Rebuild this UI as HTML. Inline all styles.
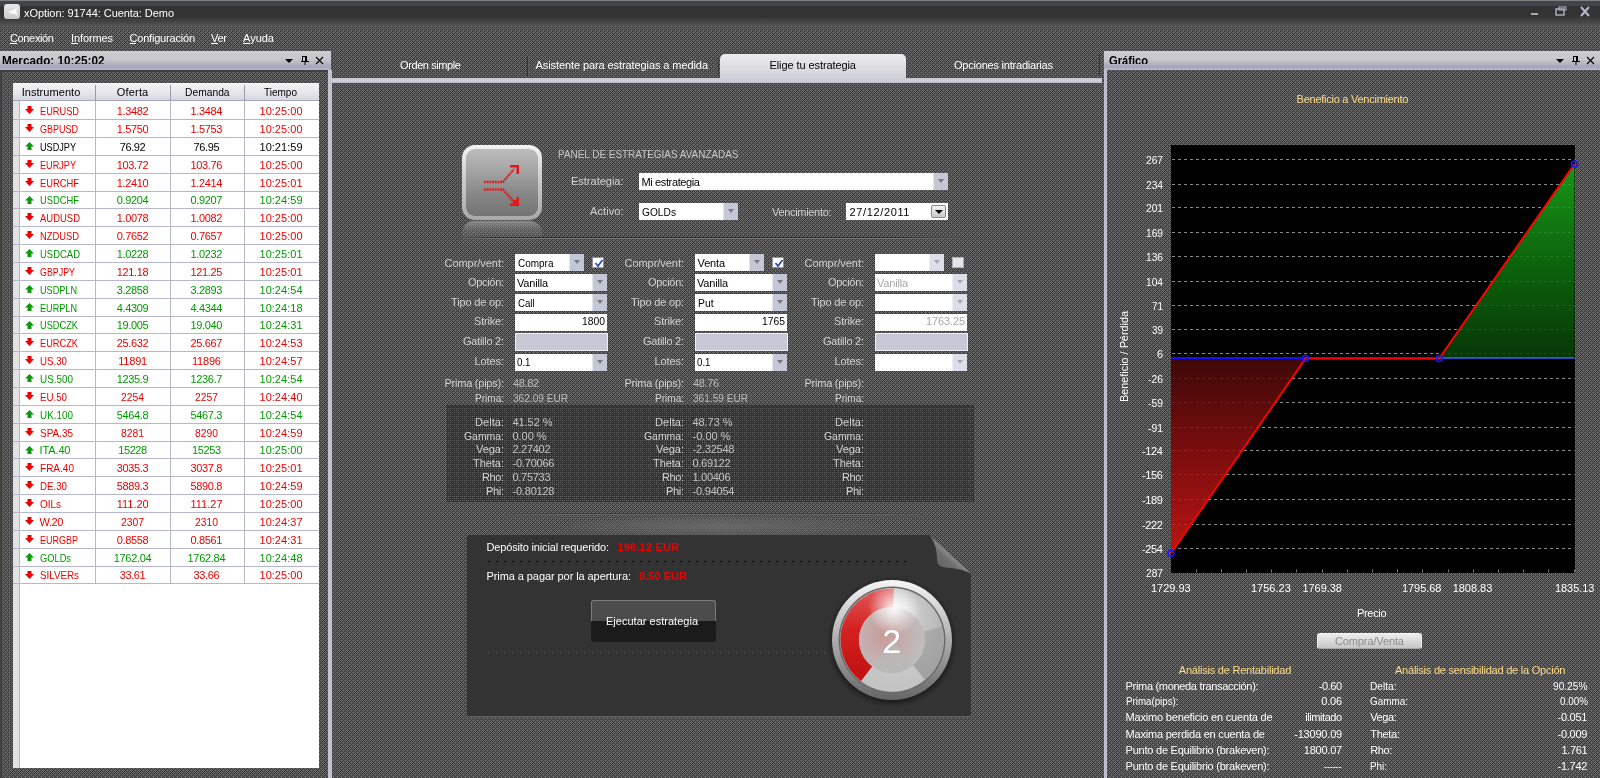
<!DOCTYPE html>
<html lang="es"><head><meta charset="utf-8"><title>xOption: 91744: Cuenta: Demo</title>
<style>
html,body{margin:0;padding:0;}
body{width:1600px;height:778px;overflow:hidden;background:#535353;font-family:"Liberation Sans",sans-serif;position:relative;}
.a{position:absolute;box-sizing:border-box;}
.t{position:absolute;white-space:nowrap;line-height:0;font-family:"Liberation Sans",sans-serif;}
svg{position:absolute;overflow:visible;}

.hdr{background:linear-gradient(#cfcfd2 0%,#c6c6cc 45%,#a9a9bd 80%,#b9b9cf 100%);}
.sel{background:#fff;}
.btn{position:absolute;right:0;top:0;bottom:0;width:14px;background:#c3c7d6;border-left:1px solid #e4e6ee;}
.btn:after{content:"";position:absolute;left:4px;top:6px;border:3px solid transparent;border-top:4px solid #7a7a7a;border-bottom:0;}
.dis .btn{background:#dcdfea;border-left-color:#eceef4;}
.dis .btn:after{border-top-color:#a8a8a8;}
</style></head>
<body>
<svg id="base" width="1600" height="778" viewBox="0 0 1600 778" shape-rendering="crispEdges" style="left:0;top:0"><defs><pattern id="dz" width="4" height="4" patternUnits="userSpaceOnUse"><rect width="4" height="4" fill="#666"/><rect x="3" y="0" width="1" height="1" fill="#333"/><rect x="0" y="1" width="1" height="1" fill="#333"/><rect x="2" y="1" width="1" height="1" fill="#333"/><rect x="1" y="2" width="1" height="1" fill="#333"/><rect x="0" y="3" width="1" height="1" fill="#333"/><rect x="2" y="3" width="1" height="1" fill="#333"/></pattern><pattern id="dk" width="8" height="8" patternUnits="userSpaceOnUse"><rect width="8" height="8" fill="#333"/><rect x="0" y="0" width="1" height="1" fill="#666"/><rect x="2" y="0" width="1" height="1" fill="#666"/><rect x="4" y="0" width="1" height="1" fill="#666"/><rect x="6" y="0" width="1" height="1" fill="#666"/><rect x="0" y="2" width="1" height="1" fill="#666"/><rect x="2" y="2" width="1" height="1" fill="#666"/><rect x="6" y="2" width="1" height="1" fill="#666"/><rect x="0" y="4" width="1" height="1" fill="#666"/><rect x="2" y="4" width="1" height="1" fill="#666"/><rect x="4" y="4" width="1" height="1" fill="#666"/><rect x="6" y="4" width="1" height="1" fill="#666"/><rect x="2" y="6" width="1" height="1" fill="#666"/><rect x="6" y="6" width="1" height="1" fill="#666"/></pattern></defs><rect width="1600" height="778" fill="url(#dz)"/><rect x="447" y="405" width="527" height="97" fill="url(#dk)"/></svg>
<div class="a " style="left:0px;top:0px;width:1600px;height:26px;background:linear-gradient(#808080 0px,#808080 1px,#42444c 1px,#42444c 5.5px,#333 6px,#333 17px,#3d3d3d 19px,#454545 22px,#4d4d4d 24px,#535353 26px);"></div>
<div class="a " style="left:4px;top:4.3px;width:16px;height:15px;background:linear-gradient(#e8e8e8,#c8c8c8);border-radius:3px;"><svg width="16" height="15" viewBox="0 0 16 15"><path d="M3 8 L9 6.5 L13 3.5 L12 7.5 L14 12 L10 9.5 L5 10 L8 8.2 Z" fill="#fff"/></svg></div>
<div class="a " style="left:10px;top:43px;width:6.5px;height:1px;background:#fff;"></div>
<div class="a " style="left:71px;top:43px;width:6.5px;height:1px;background:#fff;"></div>
<div class="a " style="left:129.5px;top:43px;width:6.5px;height:1px;background:#fff;"></div>
<div class="a " style="left:211px;top:43px;width:6.5px;height:1px;background:#fff;"></div>
<div class="a " style="left:243px;top:43px;width:6.5px;height:1px;background:#fff;"></div>
<div class="a hdr" style="left:0px;top:51px;width:331px;height:19px;"></div>
<div class="a " style="left:0px;top:70px;width:331px;height:2px;background:#404040;"></div>
<div class="a " style="left:0px;top:70px;width:1.5px;height:708px;background:#404040;"></div>
<div class="a " style="left:328px;top:70px;width:4px;height:708px;background:#c4c4d2;"></div>
<div class="a " style="left:13px;top:83px;width:306px;height:685px;background:#fff;"></div>
<div class="a " style="left:13px;top:83px;width:6.5px;height:685px;background:#e2e2e4;border-right:1px solid #b8b8c4;"></div>
<div class="a " style="left:13px;top:83px;width:306px;height:18px;background:linear-gradient(#f4f4f6,#e6e6ea 60%,#d6d6e2);border-bottom:1px solid #a8a8bc;"></div>
<div class="a " style="left:95px;top:85px;width:1px;height:15px;background:#9a9aa8;"></div>
<div class="a " style="left:95px;top:101px;width:1px;height:482px;background:#b6b6cc;"></div>
<div class="a " style="left:170px;top:85px;width:1px;height:15px;background:#9a9aa8;"></div>
<div class="a " style="left:170px;top:101px;width:1px;height:482px;background:#b6b6cc;"></div>
<div class="a " style="left:244px;top:85px;width:1px;height:15px;background:#9a9aa8;"></div>
<div class="a " style="left:244px;top:101px;width:1px;height:482px;background:#b6b6cc;"></div>
<div class="a " style="left:13px;top:119px;width:306px;height:1px;background:#b6b6cc;"></div>
<div class="a " style="left:25px;top:106px;width:9px;height:8px;"><svg width="9" height="8" viewBox="0 0 9 8"><path d="M2.5 0 H6.5 V3 H9 L4.5 8 L0 3 H2.5 Z" fill="#ee0000"/></svg></div>
<div class="a " style="left:13px;top:137px;width:306px;height:1px;background:#b6b6cc;"></div>
<div class="a " style="left:25px;top:124px;width:9px;height:8px;"><svg width="9" height="8" viewBox="0 0 9 8"><path d="M2.5 0 H6.5 V3 H9 L4.5 8 L0 3 H2.5 Z" fill="#ee0000"/></svg></div>
<div class="a " style="left:13px;top:155px;width:306px;height:1px;background:#b6b6cc;"></div>
<div class="a " style="left:25px;top:142px;width:9px;height:8px;"><svg width="9" height="8" viewBox="0 0 9 8"><path d="M4.5 0 L9 4.5 H6.5 V8 H2.5 V4.5 H0 Z" fill="#0a9a0a"/></svg></div>
<div class="a " style="left:13px;top:173px;width:306px;height:1px;background:#b6b6cc;"></div>
<div class="a " style="left:25px;top:160px;width:9px;height:8px;"><svg width="9" height="8" viewBox="0 0 9 8"><path d="M2.5 0 H6.5 V3 H9 L4.5 8 L0 3 H2.5 Z" fill="#ee0000"/></svg></div>
<div class="a " style="left:13px;top:191px;width:306px;height:1px;background:#b6b6cc;"></div>
<div class="a " style="left:25px;top:178px;width:9px;height:8px;"><svg width="9" height="8" viewBox="0 0 9 8"><path d="M2.5 0 H6.5 V3 H9 L4.5 8 L0 3 H2.5 Z" fill="#ee0000"/></svg></div>
<div class="a " style="left:13px;top:208px;width:306px;height:1px;background:#b6b6cc;"></div>
<div class="a " style="left:25px;top:196px;width:9px;height:8px;"><svg width="9" height="8" viewBox="0 0 9 8"><path d="M4.5 0 L9 4.5 H6.5 V8 H2.5 V4.5 H0 Z" fill="#0a9a0a"/></svg></div>
<div class="a " style="left:13px;top:226px;width:306px;height:1px;background:#b6b6cc;"></div>
<div class="a " style="left:25px;top:213px;width:9px;height:8px;"><svg width="9" height="8" viewBox="0 0 9 8"><path d="M2.5 0 H6.5 V3 H9 L4.5 8 L0 3 H2.5 Z" fill="#ee0000"/></svg></div>
<div class="a " style="left:13px;top:244px;width:306px;height:1px;background:#b6b6cc;"></div>
<div class="a " style="left:25px;top:231px;width:9px;height:8px;"><svg width="9" height="8" viewBox="0 0 9 8"><path d="M2.5 0 H6.5 V3 H9 L4.5 8 L0 3 H2.5 Z" fill="#ee0000"/></svg></div>
<div class="a " style="left:13px;top:262px;width:306px;height:1px;background:#b6b6cc;"></div>
<div class="a " style="left:25px;top:249px;width:9px;height:8px;"><svg width="9" height="8" viewBox="0 0 9 8"><path d="M4.5 0 L9 4.5 H6.5 V8 H2.5 V4.5 H0 Z" fill="#0a9a0a"/></svg></div>
<div class="a " style="left:13px;top:280px;width:306px;height:1px;background:#b6b6cc;"></div>
<div class="a " style="left:25px;top:267px;width:9px;height:8px;"><svg width="9" height="8" viewBox="0 0 9 8"><path d="M2.5 0 H6.5 V3 H9 L4.5 8 L0 3 H2.5 Z" fill="#ee0000"/></svg></div>
<div class="a " style="left:13px;top:298px;width:306px;height:1px;background:#b6b6cc;"></div>
<div class="a " style="left:25px;top:285px;width:9px;height:8px;"><svg width="9" height="8" viewBox="0 0 9 8"><path d="M4.5 0 L9 4.5 H6.5 V8 H2.5 V4.5 H0 Z" fill="#0a9a0a"/></svg></div>
<div class="a " style="left:13px;top:316px;width:306px;height:1px;background:#b6b6cc;"></div>
<div class="a " style="left:25px;top:303px;width:9px;height:8px;"><svg width="9" height="8" viewBox="0 0 9 8"><path d="M4.5 0 L9 4.5 H6.5 V8 H2.5 V4.5 H0 Z" fill="#0a9a0a"/></svg></div>
<div class="a " style="left:13px;top:333px;width:306px;height:1px;background:#b6b6cc;"></div>
<div class="a " style="left:25px;top:321px;width:9px;height:8px;"><svg width="9" height="8" viewBox="0 0 9 8"><path d="M4.5 0 L9 4.5 H6.5 V8 H2.5 V4.5 H0 Z" fill="#0a9a0a"/></svg></div>
<div class="a " style="left:13px;top:351px;width:306px;height:1px;background:#b6b6cc;"></div>
<div class="a " style="left:25px;top:338px;width:9px;height:8px;"><svg width="9" height="8" viewBox="0 0 9 8"><path d="M2.5 0 H6.5 V3 H9 L4.5 8 L0 3 H2.5 Z" fill="#ee0000"/></svg></div>
<div class="a " style="left:13px;top:369px;width:306px;height:1px;background:#b6b6cc;"></div>
<div class="a " style="left:25px;top:356px;width:9px;height:8px;"><svg width="9" height="8" viewBox="0 0 9 8"><path d="M2.5 0 H6.5 V3 H9 L4.5 8 L0 3 H2.5 Z" fill="#ee0000"/></svg></div>
<div class="a " style="left:13px;top:387px;width:306px;height:1px;background:#b6b6cc;"></div>
<div class="a " style="left:25px;top:374px;width:9px;height:8px;"><svg width="9" height="8" viewBox="0 0 9 8"><path d="M4.5 0 L9 4.5 H6.5 V8 H2.5 V4.5 H0 Z" fill="#0a9a0a"/></svg></div>
<div class="a " style="left:13px;top:405px;width:306px;height:1px;background:#b6b6cc;"></div>
<div class="a " style="left:25px;top:392px;width:9px;height:8px;"><svg width="9" height="8" viewBox="0 0 9 8"><path d="M2.5 0 H6.5 V3 H9 L4.5 8 L0 3 H2.5 Z" fill="#ee0000"/></svg></div>
<div class="a " style="left:13px;top:423px;width:306px;height:1px;background:#b6b6cc;"></div>
<div class="a " style="left:25px;top:410px;width:9px;height:8px;"><svg width="9" height="8" viewBox="0 0 9 8"><path d="M4.5 0 L9 4.5 H6.5 V8 H2.5 V4.5 H0 Z" fill="#0a9a0a"/></svg></div>
<div class="a " style="left:13px;top:441px;width:306px;height:1px;background:#b6b6cc;"></div>
<div class="a " style="left:25px;top:428px;width:9px;height:8px;"><svg width="9" height="8" viewBox="0 0 9 8"><path d="M2.5 0 H6.5 V3 H9 L4.5 8 L0 3 H2.5 Z" fill="#ee0000"/></svg></div>
<div class="a " style="left:13px;top:458px;width:306px;height:1px;background:#b6b6cc;"></div>
<div class="a " style="left:25px;top:446px;width:9px;height:8px;"><svg width="9" height="8" viewBox="0 0 9 8"><path d="M4.5 0 L9 4.5 H6.5 V8 H2.5 V4.5 H0 Z" fill="#0a9a0a"/></svg></div>
<div class="a " style="left:13px;top:476px;width:306px;height:1px;background:#b6b6cc;"></div>
<div class="a " style="left:25px;top:463px;width:9px;height:8px;"><svg width="9" height="8" viewBox="0 0 9 8"><path d="M2.5 0 H6.5 V3 H9 L4.5 8 L0 3 H2.5 Z" fill="#ee0000"/></svg></div>
<div class="a " style="left:13px;top:494px;width:306px;height:1px;background:#b6b6cc;"></div>
<div class="a " style="left:25px;top:481px;width:9px;height:8px;"><svg width="9" height="8" viewBox="0 0 9 8"><path d="M2.5 0 H6.5 V3 H9 L4.5 8 L0 3 H2.5 Z" fill="#ee0000"/></svg></div>
<div class="a " style="left:13px;top:512px;width:306px;height:1px;background:#b6b6cc;"></div>
<div class="a " style="left:25px;top:499px;width:9px;height:8px;"><svg width="9" height="8" viewBox="0 0 9 8"><path d="M2.5 0 H6.5 V3 H9 L4.5 8 L0 3 H2.5 Z" fill="#ee0000"/></svg></div>
<div class="a " style="left:13px;top:530px;width:306px;height:1px;background:#b6b6cc;"></div>
<div class="a " style="left:25px;top:517px;width:9px;height:8px;"><svg width="9" height="8" viewBox="0 0 9 8"><path d="M2.5 0 H6.5 V3 H9 L4.5 8 L0 3 H2.5 Z" fill="#ee0000"/></svg></div>
<div class="a " style="left:13px;top:548px;width:306px;height:1px;background:#b6b6cc;"></div>
<div class="a " style="left:25px;top:535px;width:9px;height:8px;"><svg width="9" height="8" viewBox="0 0 9 8"><path d="M2.5 0 H6.5 V3 H9 L4.5 8 L0 3 H2.5 Z" fill="#ee0000"/></svg></div>
<div class="a " style="left:13px;top:566px;width:306px;height:1px;background:#b6b6cc;"></div>
<div class="a " style="left:25px;top:553px;width:9px;height:8px;"><svg width="9" height="8" viewBox="0 0 9 8"><path d="M4.5 0 L9 4.5 H6.5 V8 H2.5 V4.5 H0 Z" fill="#0a9a0a"/></svg></div>
<div class="a " style="left:13px;top:583px;width:306px;height:1px;background:#b6b6cc;"></div>
<div class="a " style="left:25px;top:571px;width:9px;height:8px;"><svg width="9" height="8" viewBox="0 0 9 8"><path d="M2.5 0 H6.5 V3 H9 L4.5 8 L0 3 H2.5 Z" fill="#ee0000"/></svg></div>
<div class="a " style="left:332px;top:77.5px;width:770px;height:5px;background:linear-gradient(#c4c4d0,#d2d2de 50%,#bcbccc);"></div>
<div class="a " style="left:720px;top:54px;width:186px;height:27px;background:linear-gradient(#ececee,#dedee2 50%,#cacad6);border-radius:5px 5px 0 0;"></div>
<div class="a " style="left:526.5px;top:57px;width:1px;height:19px;background:#333;"></div>
<div class="a " style="left:527.5px;top:57px;width:1px;height:19px;background:#5e5e5e;"></div>
<div class="a " style="left:717.5px;top:57px;width:1px;height:19px;background:#333;"></div>
<div class="a " style="left:1098.5px;top:54px;width:1.5px;height:21px;background:#3a3a3a;"></div>
<div class="a " style="left:462px;top:145px;width:80px;height:75px;border-radius:13px;background:linear-gradient(#f4f4f4,#d0d0d0 40%,#a8a8a8);"></div>
<div class="a " style="left:466px;top:149px;width:72px;height:67px;border-radius:9px;background:linear-gradient(#bcbcbc,#a2a2a2 35%,#858585 70%,#747474);"></div>
<div class="a " style="left:462px;top:221px;width:80px;height:26px;border-radius:12px 12px 0 0;background:linear-gradient(rgba(185,185,185,.55),rgba(150,150,150,.28) 35%,rgba(120,120,120,.08) 75%,rgba(90,90,90,0));"></div>
<div class="a " style="left:455px;top:237px;width:520px;height:1px;background:linear-gradient(90deg,rgba(40,40,40,0),#2e2e2e 8%,#2e2e2e 85%,rgba(40,40,40,0));"></div>
<div class="a " style="left:455px;top:238px;width:520px;height:1px;background:linear-gradient(90deg,rgba(120,120,120,0),#777 8%,#777 85%,rgba(120,120,120,0));"></div>
<div class="a sel" style="left:639px;top:173px;width:309px;height:17px;"><div class="btn"></div></div>
<div class="a sel" style="left:639px;top:203px;width:98.5px;height:17px;"><div class="btn"></div></div>
<div class="a sel" style="left:845.5px;top:203px;width:102.5px;height:17px;"><div class="a" style="right:2px;top:2px;width:15px;height:13px;background:linear-gradient(#f4f4f4,#c8c8c8);border:1px solid #8a8a8a;border-radius:2px"></div><div class="a" style="right:5px;top:7px;border:4px solid transparent;border-top:4px solid #000;border-bottom:0"></div></div>
<div class="a sel " style="left:515px;top:254px;width:69px;height:17px;"><div class="btn"></div></div>
<div class="a " style="left:592px;top:257px;width:12px;height:11px;background:#fff;border:1px solid #8890a8;"><svg width="12" height="11" viewBox="0 0 12 11"><path d="M2.5 5 L5 8 L9.5 2" stroke="#2a4fb0" stroke-width="1.8" fill="none"/></svg></div>
<div class="a sel " style="left:515px;top:273.5px;width:92px;height:17.5px;"><div class="btn"></div></div>
<div class="a sel " style="left:515px;top:294px;width:92px;height:17px;"><div class="btn"></div></div>
<div class="a sel" style="left:515px;top:314px;width:92px;height:16.5px;"></div>
<div class="a " style="left:514.5px;top:332.5px;width:93px;height:18.5px;background:#c6c8d6;border:1px solid #f0f0f4;"></div>
<div class="a sel " style="left:515px;top:353.5px;width:92px;height:17px;"><div class="btn"></div></div>
<div class="a sel " style="left:695px;top:254px;width:69px;height:17px;"><div class="btn"></div></div>
<div class="a " style="left:772px;top:257px;width:12px;height:11px;background:#fff;border:1px solid #8890a8;"><svg width="12" height="11" viewBox="0 0 12 11"><path d="M2.5 5 L5 8 L9.5 2" stroke="#2a4fb0" stroke-width="1.8" fill="none"/></svg></div>
<div class="a sel " style="left:695px;top:273.5px;width:92px;height:17.5px;"><div class="btn"></div></div>
<div class="a sel " style="left:695px;top:294px;width:92px;height:17px;"><div class="btn"></div></div>
<div class="a sel" style="left:695px;top:314px;width:92px;height:16.5px;"></div>
<div class="a " style="left:694.5px;top:332.5px;width:93px;height:18.5px;background:#c6c8d6;border:1px solid #f0f0f4;"></div>
<div class="a sel " style="left:695px;top:353.5px;width:92px;height:17px;"><div class="btn"></div></div>
<div class="a sel dis" style="left:875px;top:254px;width:69px;height:17px;"><div class="btn"></div></div>
<div class="a " style="left:952px;top:257px;width:12px;height:11px;background:#fff;border:1px solid #b0b0b8;background:#e4e4ea;"></div>
<div class="a sel dis" style="left:875px;top:273.5px;width:92px;height:17.5px;"><div class="btn"></div></div>
<div class="a sel dis" style="left:875px;top:294px;width:92px;height:17px;"><div class="btn"></div></div>
<div class="a sel" style="left:875px;top:314px;width:92px;height:16.5px;"></div>
<div class="a " style="left:874.5px;top:332.5px;width:93px;height:18.5px;background:#c6c8d6;border:1px solid #f0f0f4;"></div>
<div class="a sel dis" style="left:875px;top:353.5px;width:92px;height:17px;"><div class="btn"></div></div>
<div class="a " style="left:490px;top:512.5px;width:450px;height:1px;background:linear-gradient(90deg,rgba(40,40,40,0),#383838 15%,#383838 85%,rgba(40,40,40,0));"></div>
<div class="a " style="left:490px;top:513.5px;width:450px;height:1px;background:linear-gradient(90deg,rgba(120,120,120,0),#6c6c6c 15%,#6c6c6c 85%,rgba(120,120,120,0));"></div>
<div class="a " style="left:560px;top:514.5px;width:320px;height:20px;background:radial-gradient(ellipse at 50% 55%,rgba(106,106,106,.95),rgba(100,100,100,.55) 45%,rgba(83,83,83,0) 72%);"></div>
<div class="a " style="left:467px;top:534.5px;width:504px;height:181.5px;background:#333;border-radius:2px;clip-path:polygon(0 0,461.8px 0,504px 39.2px,504px 100%,0 100%);"></div>
<div class="a " style="left:468px;top:716px;width:502px;height:1px;background:#666;"></div>
<div class="a " style="left:474px;top:719px;width:492px;height:1px;background:#474747;"></div>
<div class="a " style="left:488px;top:561px;width:420px;height:1px;background:repeating-linear-gradient(90deg,#000 0 2px,transparent 2px 8px);"></div>
<div class="a " style="left:488px;top:652px;width:345px;height:1px;background:repeating-linear-gradient(90deg,#6a6a6a 0 1px,transparent 1px 8px);"></div>
<div class="a " style="left:591px;top:600px;width:125px;height:42px;border-radius:3px;background:linear-gradient(#4d4d4d 0,#4b4b4b 49%,#1b1b1b 50%,#1c1c1c 100%);"></div>
<div class="a " style="left:591px;top:600px;width:125px;height:21px;border-radius:3px 3px 0 0;border:1px solid #7c7c7c;border-bottom:0;"></div>
<div class="a hdr" style="left:1104px;top:51px;width:496px;height:19px;"></div>
<div class="a " style="left:1103.5px;top:70px;width:3.5px;height:708px;background:#c0c0d0;"></div>
<div class="a " style="left:1171px;top:145px;width:403.5px;height:427.5px;background:#000;"></div>
<div class="a " style="left:1317px;top:633px;width:105px;height:15.5px;background:linear-gradient(#ececec,#dadada 50%,#c6c6c6);border-radius:3px;border:1px solid #f4f4f4;border-bottom-color:#a8a8a8;"></div>
<div id="txt" style="position:absolute;left:0;top:0;width:1600px;height:778px;will-change:transform">
<span class="t " style="left:24.00px;top:13.19px;font-size:11px;color:#fff;letter-spacing:-0.061px;">xOption: 91744: Cuenta: Demo</span>
<span class="t " style="left:10.00px;top:37.69px;font-size:11px;color:#fff;letter-spacing:-0.355px;">Conexión</span>
<span class="t " style="left:71.00px;top:37.69px;font-size:11px;color:#fff;letter-spacing:-0.114px;">Informes</span>
<span class="t " style="left:129.50px;top:37.69px;font-size:11px;color:#fff;letter-spacing:-0.198px;">Configuración</span>
<span class="t " style="left:211.00px;top:37.69px;font-size:11px;color:#fff;letter-spacing:-0.258px;">Ver</span>
<span class="t " style="left:243.00px;top:37.69px;font-size:11px;color:#fff;">Ayuda</span>
<span class="t " style="left:1.50px;top:61.30px;font-size:13px;color:#000;transform:scaleX(0.9035);transform-origin:0 0;font-weight:bold;">Mercado: 10:25:02</span>
<span class="t " style="left:21.70px;top:92.19px;font-size:11px;color:#000;letter-spacing:0.051px;">Instrumento</span>
<span class="t " style="left:116.75px;top:92.19px;font-size:11px;color:#000;letter-spacing:0.184px;">Oferta</span>
<span class="t " style="left:184.50px;top:92.19px;font-size:11px;color:#000;transform:scaleX(0.9349);transform-origin:0 0;">Demanda</span>
<span class="t " style="left:264.10px;top:92.19px;font-size:11px;color:#000;transform:scaleX(0.9096);transform-origin:0 0;">Tiempo</span>
<span class="t " style="left:39.50px;top:111.19px;font-size:11px;color:#ee0000;transform:scaleX(0.8396);transform-origin:0 0;">EURUSD</span>
<span class="t " style="left:116.70px;top:111.19px;font-size:11px;color:#ee0000;letter-spacing:-0.331px;">1.3482</span>
<span class="t " style="left:190.50px;top:111.19px;font-size:11px;color:#ee0000;letter-spacing:-0.331px;">1.3484</span>
<span class="t " style="left:259.50px;top:111.19px;font-size:11px;color:#ee0000;letter-spacing:0.025px;">10:25:00</span>
<span class="t " style="left:39.50px;top:129.19px;font-size:11px;color:#ee0000;transform:scaleX(0.8178);transform-origin:0 0;">GBPUSD</span>
<span class="t " style="left:116.70px;top:129.19px;font-size:11px;color:#ee0000;letter-spacing:-0.331px;">1.5750</span>
<span class="t " style="left:190.50px;top:129.19px;font-size:11px;color:#ee0000;letter-spacing:-0.331px;">1.5753</span>
<span class="t " style="left:259.50px;top:129.19px;font-size:11px;color:#ee0000;letter-spacing:0.025px;">10:25:00</span>
<span class="t " style="left:39.50px;top:147.19px;font-size:11px;color:#000;transform:scaleX(0.8294);transform-origin:0 0;">USDJPY</span>
<span class="t " style="left:119.70px;top:147.19px;font-size:11px;color:#000;letter-spacing:-0.383px;">76.92</span>
<span class="t " style="left:193.50px;top:147.19px;font-size:11px;color:#000;letter-spacing:-0.383px;">76.95</span>
<span class="t " style="left:259.50px;top:147.19px;font-size:11px;color:#000;letter-spacing:0.025px;">10:21:59</span>
<span class="t " style="left:39.50px;top:165.19px;font-size:11px;color:#ee0000;transform:scaleX(0.8294);transform-origin:0 0;">EURJPY</span>
<span class="t " style="left:116.70px;top:165.19px;font-size:11px;color:#ee0000;letter-spacing:-0.331px;">103.72</span>
<span class="t " style="left:190.50px;top:165.19px;font-size:11px;color:#ee0000;letter-spacing:-0.331px;">103.76</span>
<span class="t " style="left:259.50px;top:165.19px;font-size:11px;color:#ee0000;letter-spacing:0.025px;">10:25:00</span>
<span class="t " style="left:39.50px;top:183.19px;font-size:11px;color:#ee0000;transform:scaleX(0.8507);transform-origin:0 0;">EURCHF</span>
<span class="t " style="left:116.70px;top:183.19px;font-size:11px;color:#ee0000;letter-spacing:-0.331px;">1.2410</span>
<span class="t " style="left:190.50px;top:183.19px;font-size:11px;color:#ee0000;letter-spacing:-0.331px;">1.2414</span>
<span class="t " style="left:259.50px;top:183.19px;font-size:11px;color:#ee0000;letter-spacing:0.025px;">10:25:01</span>
<span class="t " style="left:39.50px;top:200.19px;font-size:11px;color:#009a00;transform:scaleX(0.8507);transform-origin:0 0;">USDCHF</span>
<span class="t " style="left:116.70px;top:200.19px;font-size:11px;color:#009a00;letter-spacing:-0.331px;">0.9204</span>
<span class="t " style="left:190.50px;top:200.19px;font-size:11px;color:#009a00;letter-spacing:-0.331px;">0.9207</span>
<span class="t " style="left:259.50px;top:200.19px;font-size:11px;color:#009a00;letter-spacing:0.025px;">10:24:59</span>
<span class="t " style="left:39.50px;top:218.19px;font-size:11px;color:#ee0000;transform:scaleX(0.8611);transform-origin:0 0;">AUDUSD</span>
<span class="t " style="left:116.70px;top:218.19px;font-size:11px;color:#ee0000;letter-spacing:-0.331px;">1.0078</span>
<span class="t " style="left:190.50px;top:218.19px;font-size:11px;color:#ee0000;letter-spacing:-0.331px;">1.0082</span>
<span class="t " style="left:259.50px;top:218.19px;font-size:11px;color:#ee0000;letter-spacing:0.025px;">10:25:00</span>
<span class="t " style="left:39.50px;top:236.19px;font-size:11px;color:#ee0000;transform:scaleX(0.8507);transform-origin:0 0;">NZDUSD</span>
<span class="t " style="left:116.70px;top:236.19px;font-size:11px;color:#ee0000;letter-spacing:-0.331px;">0.7652</span>
<span class="t " style="left:190.50px;top:236.19px;font-size:11px;color:#ee0000;letter-spacing:-0.331px;">0.7657</span>
<span class="t " style="left:259.50px;top:236.19px;font-size:11px;color:#ee0000;letter-spacing:0.025px;">10:25:00</span>
<span class="t " style="left:39.50px;top:254.19px;font-size:11px;color:#009a00;transform:scaleX(0.8611);transform-origin:0 0;">USDCAD</span>
<span class="t " style="left:116.70px;top:254.19px;font-size:11px;color:#009a00;letter-spacing:-0.331px;">1.0228</span>
<span class="t " style="left:190.50px;top:254.19px;font-size:11px;color:#009a00;letter-spacing:-0.331px;">1.0232</span>
<span class="t " style="left:259.50px;top:254.19px;font-size:11px;color:#009a00;letter-spacing:0.025px;">10:25:01</span>
<span class="t " style="left:39.50px;top:272.19px;font-size:11px;color:#ee0000;transform:scaleX(0.8063);transform-origin:0 0;">GBPJPY</span>
<span class="t " style="left:116.70px;top:272.19px;font-size:11px;color:#ee0000;letter-spacing:-0.331px;">121.18</span>
<span class="t " style="left:190.50px;top:272.19px;font-size:11px;color:#ee0000;letter-spacing:-0.331px;">121.25</span>
<span class="t " style="left:259.50px;top:272.19px;font-size:11px;color:#ee0000;letter-spacing:0.025px;">10:25:01</span>
<span class="t " style="left:39.50px;top:290.19px;font-size:11px;color:#009a00;transform:scaleX(0.8291);transform-origin:0 0;">USDPLN</span>
<span class="t " style="left:116.70px;top:290.19px;font-size:11px;color:#009a00;letter-spacing:-0.331px;">3.2858</span>
<span class="t " style="left:190.50px;top:290.19px;font-size:11px;color:#009a00;letter-spacing:-0.331px;">3.2893</span>
<span class="t " style="left:259.50px;top:290.19px;font-size:11px;color:#009a00;letter-spacing:0.025px;">10:24:54</span>
<span class="t " style="left:39.50px;top:308.19px;font-size:11px;color:#009a00;transform:scaleX(0.8291);transform-origin:0 0;">EURPLN</span>
<span class="t " style="left:116.70px;top:308.19px;font-size:11px;color:#009a00;letter-spacing:-0.331px;">4.4309</span>
<span class="t " style="left:190.50px;top:308.19px;font-size:11px;color:#009a00;letter-spacing:-0.331px;">4.4344</span>
<span class="t " style="left:259.50px;top:308.19px;font-size:11px;color:#009a00;letter-spacing:0.025px;">10:24:18</span>
<span class="t " style="left:39.50px;top:325.19px;font-size:11px;color:#009a00;transform:scaleX(0.8401);transform-origin:0 0;">USDCZK</span>
<span class="t " style="left:116.70px;top:325.19px;font-size:11px;color:#009a00;letter-spacing:-0.331px;">19.005</span>
<span class="t " style="left:190.50px;top:325.19px;font-size:11px;color:#009a00;letter-spacing:-0.331px;">19.040</span>
<span class="t " style="left:259.50px;top:325.19px;font-size:11px;color:#009a00;letter-spacing:0.025px;">10:24:31</span>
<span class="t " style="left:39.50px;top:343.19px;font-size:11px;color:#ee0000;transform:scaleX(0.8401);transform-origin:0 0;">EURCZK</span>
<span class="t " style="left:116.70px;top:343.19px;font-size:11px;color:#ee0000;letter-spacing:-0.331px;">25.632</span>
<span class="t " style="left:190.50px;top:343.19px;font-size:11px;color:#ee0000;letter-spacing:-0.331px;">25.667</span>
<span class="t " style="left:259.50px;top:343.19px;font-size:11px;color:#ee0000;letter-spacing:0.025px;">10:24:53</span>
<span class="t " style="left:39.50px;top:361.19px;font-size:11px;color:#ee0000;transform:scaleX(0.8830);transform-origin:0 0;">US.30</span>
<span class="t " style="left:118.20px;top:361.19px;font-size:11px;color:#ee0000;letter-spacing:-0.195px;">11891</span>
<span class="t " style="left:192.00px;top:361.19px;font-size:11px;color:#ee0000;letter-spacing:-0.195px;">11896</span>
<span class="t " style="left:259.50px;top:361.19px;font-size:11px;color:#ee0000;letter-spacing:0.025px;">10:24:57</span>
<span class="t " style="left:39.50px;top:379.19px;font-size:11px;color:#009a00;transform:scaleX(0.8991);transform-origin:0 0;">US.500</span>
<span class="t " style="left:116.70px;top:379.19px;font-size:11px;color:#009a00;letter-spacing:-0.331px;">1235.9</span>
<span class="t " style="left:190.50px;top:379.19px;font-size:11px;color:#009a00;letter-spacing:-0.331px;">1236.7</span>
<span class="t " style="left:259.50px;top:379.19px;font-size:11px;color:#009a00;letter-spacing:0.025px;">10:24:54</span>
<span class="t " style="left:39.50px;top:397.19px;font-size:11px;color:#ee0000;transform:scaleX(0.8830);transform-origin:0 0;">EU.50</span>
<span class="t " style="left:121.20px;top:397.19px;font-size:11px;color:#ee0000;transform:scaleX(0.9394);transform-origin:0 0;">2254</span>
<span class="t " style="left:195.00px;top:397.19px;font-size:11px;color:#ee0000;transform:scaleX(0.9394);transform-origin:0 0;">2257</span>
<span class="t " style="left:259.50px;top:397.19px;font-size:11px;color:#ee0000;letter-spacing:0.025px;">10:24:40</span>
<span class="t " style="left:39.50px;top:415.19px;font-size:11px;color:#009a00;transform:scaleX(0.8991);transform-origin:0 0;">UK.100</span>
<span class="t " style="left:116.70px;top:415.19px;font-size:11px;color:#009a00;letter-spacing:-0.331px;">5464.8</span>
<span class="t " style="left:190.50px;top:415.19px;font-size:11px;color:#009a00;letter-spacing:-0.331px;">5467.3</span>
<span class="t " style="left:259.50px;top:415.19px;font-size:11px;color:#009a00;letter-spacing:0.025px;">10:24:54</span>
<span class="t " style="left:39.50px;top:433.19px;font-size:11px;color:#ee0000;transform:scaleX(0.9041);transform-origin:0 0;">SPA.35</span>
<span class="t " style="left:121.20px;top:433.19px;font-size:11px;color:#ee0000;transform:scaleX(0.9394);transform-origin:0 0;">8281</span>
<span class="t " style="left:195.00px;top:433.19px;font-size:11px;color:#ee0000;transform:scaleX(0.9394);transform-origin:0 0;">8290</span>
<span class="t " style="left:259.50px;top:433.19px;font-size:11px;color:#ee0000;letter-spacing:0.025px;">10:24:59</span>
<span class="t " style="left:39.50px;top:450.19px;font-size:11px;color:#009a00;letter-spacing:-0.119px;">ITA.40</span>
<span class="t " style="left:118.20px;top:450.19px;font-size:11px;color:#009a00;letter-spacing:-0.398px;">15228</span>
<span class="t " style="left:192.00px;top:450.19px;font-size:11px;color:#009a00;letter-spacing:-0.398px;">15253</span>
<span class="t " style="left:259.50px;top:450.19px;font-size:11px;color:#009a00;letter-spacing:0.025px;">10:25:00</span>
<span class="t " style="left:39.50px;top:468.19px;font-size:11px;color:#ee0000;transform:scaleX(0.9116);transform-origin:0 0;">FRA.40</span>
<span class="t " style="left:116.70px;top:468.19px;font-size:11px;color:#ee0000;letter-spacing:-0.331px;">3035.3</span>
<span class="t " style="left:190.50px;top:468.19px;font-size:11px;color:#ee0000;letter-spacing:-0.331px;">3037.8</span>
<span class="t " style="left:259.50px;top:468.19px;font-size:11px;color:#ee0000;letter-spacing:0.025px;">10:25:01</span>
<span class="t " style="left:39.50px;top:486.19px;font-size:11px;color:#ee0000;transform:scaleX(0.8830);transform-origin:0 0;">DE.30</span>
<span class="t " style="left:116.70px;top:486.19px;font-size:11px;color:#ee0000;letter-spacing:-0.331px;">5889.3</span>
<span class="t " style="left:190.50px;top:486.19px;font-size:11px;color:#ee0000;letter-spacing:-0.331px;">5890.8</span>
<span class="t " style="left:259.50px;top:486.19px;font-size:11px;color:#ee0000;letter-spacing:0.025px;">10:24:59</span>
<span class="t " style="left:39.50px;top:504.19px;font-size:11px;color:#ee0000;transform:scaleX(0.9038);transform-origin:0 0;">OILs</span>
<span class="t " style="left:116.70px;top:504.19px;font-size:11px;color:#ee0000;">111.20</span>
<span class="t " style="left:190.50px;top:504.19px;font-size:11px;color:#ee0000;">111.27</span>
<span class="t " style="left:259.50px;top:504.19px;font-size:11px;color:#ee0000;letter-spacing:0.025px;">10:25:00</span>
<span class="t " style="left:39.50px;top:522.19px;font-size:11px;color:#ee0000;letter-spacing:-0.359px;">W.20</span>
<span class="t " style="left:121.20px;top:522.19px;font-size:11px;color:#ee0000;transform:scaleX(0.9394);transform-origin:0 0;">2307</span>
<span class="t " style="left:195.00px;top:522.19px;font-size:11px;color:#ee0000;transform:scaleX(0.9394);transform-origin:0 0;">2310</span>
<span class="t " style="left:259.50px;top:522.19px;font-size:11px;color:#ee0000;letter-spacing:0.025px;">10:24:37</span>
<span class="t " style="left:39.50px;top:540.19px;font-size:11px;color:#ee0000;transform:scaleX(0.8178);transform-origin:0 0;">EURGBP</span>
<span class="t " style="left:116.70px;top:540.19px;font-size:11px;color:#ee0000;letter-spacing:-0.331px;">0.8558</span>
<span class="t " style="left:190.50px;top:540.19px;font-size:11px;color:#ee0000;letter-spacing:-0.331px;">0.8561</span>
<span class="t " style="left:259.50px;top:540.19px;font-size:11px;color:#ee0000;letter-spacing:0.025px;">10:24:31</span>
<span class="t " style="left:39.50px;top:558.19px;font-size:11px;color:#009a00;transform:scaleX(0.8450);transform-origin:0 0;">GOLDs</span>
<span class="t " style="left:113.70px;top:558.19px;font-size:11px;color:#009a00;letter-spacing:-0.294px;">1762.04</span>
<span class="t " style="left:187.50px;top:558.19px;font-size:11px;color:#009a00;letter-spacing:-0.294px;">1762.84</span>
<span class="t " style="left:259.50px;top:558.19px;font-size:11px;color:#009a00;letter-spacing:0.025px;">10:24:48</span>
<span class="t " style="left:39.50px;top:575.19px;font-size:11px;color:#ee0000;transform:scaleX(0.8902);transform-origin:0 0;">SILVERs</span>
<span class="t " style="left:119.70px;top:575.19px;font-size:11px;color:#ee0000;letter-spacing:-0.383px;">33.61</span>
<span class="t " style="left:193.50px;top:575.19px;font-size:11px;color:#ee0000;letter-spacing:-0.383px;">33.66</span>
<span class="t " style="left:259.50px;top:575.19px;font-size:11px;color:#ee0000;letter-spacing:0.025px;">10:25:00</span>
<span class="t " style="left:400.00px;top:65.19px;font-size:11px;color:#fff;letter-spacing:-0.402px;">Orden simple</span>
<span class="t " style="left:535.50px;top:65.19px;font-size:11px;color:#fff;letter-spacing:-0.088px;">Asistente para estrategias a medida</span>
<span class="t " style="left:769.50px;top:65.19px;font-size:11px;color:#000;letter-spacing:-0.087px;">Elige tu estrategia</span>
<span class="t " style="left:954.00px;top:65.19px;font-size:11px;color:#fff;letter-spacing:-0.217px;">Opciones intradiarias</span>
<span class="t " style="left:557.60px;top:154.19px;font-size:11px;color:#c8c8c8;transform:scaleX(0.9030);transform-origin:0 0;">PANEL DE ESTRATEGIAS AVANZADAS</span>
<span class="t " style="left:571.00px;top:181.19px;font-size:11px;color:#d2d2d2;letter-spacing:-0.009px;">Estrategia:</span>
<span class="t " style="left:590.00px;top:211.19px;font-size:11px;color:#d2d2d2;letter-spacing:0.081px;">Activo:</span>
<span class="t " style="left:772.00px;top:212.19px;font-size:11px;color:#d2d2d2;letter-spacing:-0.317px;">Vencimiento:</span>
<span class="t " style="left:641.50px;top:181.69px;font-size:11px;color:#000;letter-spacing:-0.374px;">Mi estrategia</span>
<span class="t " style="left:642.00px;top:211.69px;font-size:11px;color:#000;transform:scaleX(0.9267);transform-origin:0 0;">GOLDs</span>
<span class="t " style="left:849.50px;top:211.69px;font-size:11px;color:#000;letter-spacing:0.639px;">27/12/2011</span>
<span class="t " style="left:444.50px;top:262.69px;font-size:11px;color:#d2d2d2;letter-spacing:-0.042px;">Compr/vent:</span>
<span class="t " style="left:468.00px;top:282.19px;font-size:11px;color:#d2d2d2;letter-spacing:-0.320px;">Opción:</span>
<span class="t " style="left:451.00px;top:302.19px;font-size:11px;color:#d2d2d2;letter-spacing:-0.164px;">Tipo de op:</span>
<span class="t " style="left:474.00px;top:321.19px;font-size:11px;color:#d2d2d2;letter-spacing:-0.198px;">Strike:</span>
<span class="t " style="left:463.00px;top:340.69px;font-size:11px;color:#d2d2d2;letter-spacing:-0.269px;">Gatillo 2:</span>
<span class="t " style="left:474.50px;top:361.19px;font-size:11px;color:#d2d2d2;letter-spacing:-0.094px;">Lotes:</span>
<span class="t " style="left:444.50px;top:383.19px;font-size:11px;color:#d2d2d2;letter-spacing:-0.237px;">Prima (pips):</span>
<span class="t " style="left:475.00px;top:398.19px;font-size:11px;color:#d2d2d2;transform:scaleX(0.9125);transform-origin:0 0;">Prima:</span>
<span class="t " style="left:517.60px;top:263.19px;font-size:11px;color:#000;transform:scaleX(0.9073);transform-origin:0 0;">Compra</span>
<span class="t " style="left:517.00px;top:282.99px;font-size:11px;color:#000;letter-spacing:-0.170px;">Vanilla</span>
<span class="t " style="left:517.60px;top:303.19px;font-size:11px;color:#000;transform:scaleX(0.8758);transform-origin:0 0;">Call</span>
<span class="t " style="left:582.00px;top:321.19px;font-size:11px;color:#000;transform:scaleX(0.9394);transform-origin:0 0;">1800</span>
<span class="t " style="left:517.00px;top:361.69px;font-size:11px;color:#000;transform:scaleX(0.8825);transform-origin:0 0;">0.1</span>
<span class="t " style="left:513.00px;top:383.19px;font-size:11px;color:#bdbdbd;letter-spacing:-0.383px;">48.82</span>
<span class="t " style="left:513.00px;top:398.19px;font-size:11px;color:#bdbdbd;transform:scaleX(0.9176);transform-origin:0 0;">362.09 EUR</span>
<span class="t " style="left:624.50px;top:262.69px;font-size:11px;color:#d2d2d2;letter-spacing:-0.042px;">Compr/vent:</span>
<span class="t " style="left:648.00px;top:282.19px;font-size:11px;color:#d2d2d2;letter-spacing:-0.320px;">Opción:</span>
<span class="t " style="left:631.00px;top:302.19px;font-size:11px;color:#d2d2d2;letter-spacing:-0.164px;">Tipo de op:</span>
<span class="t " style="left:654.00px;top:321.19px;font-size:11px;color:#d2d2d2;letter-spacing:-0.198px;">Strike:</span>
<span class="t " style="left:643.00px;top:340.69px;font-size:11px;color:#d2d2d2;letter-spacing:-0.269px;">Gatillo 2:</span>
<span class="t " style="left:654.50px;top:361.19px;font-size:11px;color:#d2d2d2;letter-spacing:-0.094px;">Lotes:</span>
<span class="t " style="left:624.50px;top:383.19px;font-size:11px;color:#d2d2d2;letter-spacing:-0.237px;">Prima (pips):</span>
<span class="t " style="left:655.00px;top:398.19px;font-size:11px;color:#d2d2d2;transform:scaleX(0.9125);transform-origin:0 0;">Prima:</span>
<span class="t " style="left:697.60px;top:263.19px;font-size:11px;color:#000;letter-spacing:-0.160px;">Venta</span>
<span class="t " style="left:697.00px;top:282.99px;font-size:11px;color:#000;letter-spacing:-0.170px;">Vanilla</span>
<span class="t " style="left:697.60px;top:303.19px;font-size:11px;color:#000;transform:scaleX(0.9385);transform-origin:0 0;">Put</span>
<span class="t " style="left:762.00px;top:321.19px;font-size:11px;color:#000;transform:scaleX(0.9394);transform-origin:0 0;">1765</span>
<span class="t " style="left:697.00px;top:361.69px;font-size:11px;color:#000;transform:scaleX(0.8825);transform-origin:0 0;">0.1</span>
<span class="t " style="left:693.00px;top:383.19px;font-size:11px;color:#bdbdbd;letter-spacing:-0.383px;">48.76</span>
<span class="t " style="left:693.00px;top:398.19px;font-size:11px;color:#bdbdbd;transform:scaleX(0.9176);transform-origin:0 0;">361.59 EUR</span>
<span class="t " style="left:804.50px;top:262.69px;font-size:11px;color:#d2d2d2;letter-spacing:-0.042px;">Compr/vent:</span>
<span class="t " style="left:828.00px;top:282.19px;font-size:11px;color:#d2d2d2;letter-spacing:-0.320px;">Opción:</span>
<span class="t " style="left:811.00px;top:302.19px;font-size:11px;color:#d2d2d2;letter-spacing:-0.164px;">Tipo de op:</span>
<span class="t " style="left:834.00px;top:321.19px;font-size:11px;color:#d2d2d2;letter-spacing:-0.198px;">Strike:</span>
<span class="t " style="left:823.00px;top:340.69px;font-size:11px;color:#d2d2d2;letter-spacing:-0.269px;">Gatillo 2:</span>
<span class="t " style="left:834.50px;top:361.19px;font-size:11px;color:#d2d2d2;letter-spacing:-0.094px;">Lotes:</span>
<span class="t " style="left:804.50px;top:383.19px;font-size:11px;color:#d2d2d2;letter-spacing:-0.237px;">Prima (pips):</span>
<span class="t " style="left:835.00px;top:398.19px;font-size:11px;color:#d2d2d2;transform:scaleX(0.9125);transform-origin:0 0;">Prima:</span>
<span class="t " style="left:877.00px;top:282.99px;font-size:11px;color:#a8a8a8;letter-spacing:-0.170px;">Vanilla</span>
<span class="t " style="left:926.00px;top:321.19px;font-size:11px;color:#a8a8a8;letter-spacing:-0.128px;">1763.25</span>
<span class="t " style="left:475.00px;top:421.69px;font-size:11px;color:#d2d2d2;letter-spacing:0.050px;">Delta:</span>
<span class="t " style="left:512.50px;top:421.69px;font-size:11px;color:#c4c4c4;letter-spacing:-0.062px;">41.52 %</span>
<span class="t " style="left:464.00px;top:436.19px;font-size:11px;color:#d2d2d2;transform:scaleX(0.9481);transform-origin:0 0;">Gamma:</span>
<span class="t " style="left:512.50px;top:436.19px;font-size:11px;color:#c4c4c4;letter-spacing:-0.050px;">0.00 %</span>
<span class="t " style="left:476.00px;top:448.69px;font-size:11px;color:#d2d2d2;letter-spacing:-0.035px;">Vega:</span>
<span class="t " style="left:512.50px;top:448.69px;font-size:11px;color:#c4c4c4;letter-spacing:-0.294px;">2.27402</span>
<span class="t " style="left:473.00px;top:463.19px;font-size:11px;color:#d2d2d2;letter-spacing:-0.037px;">Theta:</span>
<span class="t " style="left:512.50px;top:463.19px;font-size:11px;color:#c4c4c4;letter-spacing:-0.205px;">-0.70066</span>
<span class="t " style="left:482.00px;top:476.69px;font-size:11px;color:#d2d2d2;letter-spacing:-0.417px;">Rho:</span>
<span class="t " style="left:512.50px;top:476.69px;font-size:11px;color:#c4c4c4;letter-spacing:-0.294px;">0.75733</span>
<span class="t " style="left:486.00px;top:490.69px;font-size:11px;color:#d2d2d2;letter-spacing:-0.323px;">Phi:</span>
<span class="t " style="left:512.50px;top:490.69px;font-size:11px;color:#c4c4c4;letter-spacing:-0.205px;">-0.80128</span>
<span class="t " style="left:655.00px;top:421.69px;font-size:11px;color:#d2d2d2;letter-spacing:0.050px;">Delta:</span>
<span class="t " style="left:692.50px;top:421.69px;font-size:11px;color:#c4c4c4;letter-spacing:-0.062px;">48.73 %</span>
<span class="t " style="left:644.00px;top:436.19px;font-size:11px;color:#d2d2d2;transform:scaleX(0.9481);transform-origin:0 0;">Gamma:</span>
<span class="t " style="left:692.50px;top:436.19px;font-size:11px;color:#c4c4c4;letter-spacing:0.013px;">-0.00 %</span>
<span class="t " style="left:656.00px;top:448.69px;font-size:11px;color:#d2d2d2;letter-spacing:-0.035px;">Vega:</span>
<span class="t " style="left:692.50px;top:448.69px;font-size:11px;color:#c4c4c4;letter-spacing:-0.205px;">-2.32548</span>
<span class="t " style="left:653.00px;top:463.19px;font-size:11px;color:#d2d2d2;letter-spacing:-0.037px;">Theta:</span>
<span class="t " style="left:692.50px;top:463.19px;font-size:11px;color:#c4c4c4;letter-spacing:-0.294px;">0.69122</span>
<span class="t " style="left:662.00px;top:476.69px;font-size:11px;color:#d2d2d2;letter-spacing:-0.417px;">Rho:</span>
<span class="t " style="left:692.50px;top:476.69px;font-size:11px;color:#c4c4c4;letter-spacing:-0.294px;">1.00406</span>
<span class="t " style="left:666.00px;top:490.69px;font-size:11px;color:#d2d2d2;letter-spacing:-0.323px;">Phi:</span>
<span class="t " style="left:692.50px;top:490.69px;font-size:11px;color:#c4c4c4;letter-spacing:-0.205px;">-0.94054</span>
<span class="t " style="left:835.00px;top:421.69px;font-size:11px;color:#d2d2d2;letter-spacing:0.050px;">Delta:</span>
<span class="t " style="left:824.00px;top:436.19px;font-size:11px;color:#d2d2d2;transform:scaleX(0.9481);transform-origin:0 0;">Gamma:</span>
<span class="t " style="left:836.00px;top:448.69px;font-size:11px;color:#d2d2d2;letter-spacing:-0.035px;">Vega:</span>
<span class="t " style="left:833.00px;top:463.19px;font-size:11px;color:#d2d2d2;letter-spacing:-0.037px;">Theta:</span>
<span class="t " style="left:842.00px;top:476.69px;font-size:11px;color:#d2d2d2;letter-spacing:-0.417px;">Rho:</span>
<span class="t " style="left:846.00px;top:490.69px;font-size:11px;color:#d2d2d2;letter-spacing:-0.323px;">Phi:</span>
<span class="t " style="left:486.50px;top:547.19px;font-size:11px;color:#fff;letter-spacing:-0.157px;">Depósito inicial requerido:</span>
<span class="t " style="left:617.50px;top:547.19px;font-size:11px;color:#f00000;letter-spacing:0.174px;font-weight:bold;">196.12 EUR</span>
<span class="t " style="left:486.50px;top:575.69px;font-size:11px;color:#fff;letter-spacing:-0.078px;">Prima a pagar por la apertura:</span>
<span class="t " style="left:639.00px;top:575.69px;font-size:11px;color:#f00000;letter-spacing:0.042px;font-weight:bold;">0.50 EUR</span>
<span class="t " style="left:606.00px;top:621.19px;font-size:11px;color:#fff;letter-spacing:0.016px;">Ejecutar estrategia</span>
<span class="t " style="left:1109.00px;top:61.10px;font-size:13px;color:#000;transform:scaleX(0.8568);transform-origin:0 0;font-weight:bold;">Gráfico</span>
<span class="t " style="left:1296.60px;top:98.69px;font-size:11px;color:#ffdc86;letter-spacing:-0.256px;">Beneficio a Vencimiento</span>
<span class="t " style="left:1146.00px;top:160.19px;font-size:11px;color:#fff;transform:scaleX(0.9260);transform-origin:0 0;">267</span>
<span class="t " style="left:1146.00px;top:185.19px;font-size:11px;color:#fff;transform:scaleX(0.9260);transform-origin:0 0;">234</span>
<span class="t " style="left:1146.00px;top:208.19px;font-size:11px;color:#fff;transform:scaleX(0.9260);transform-origin:0 0;">201</span>
<span class="t " style="left:1146.00px;top:233.19px;font-size:11px;color:#fff;transform:scaleX(0.9260);transform-origin:0 0;">169</span>
<span class="t " style="left:1146.00px;top:257.19px;font-size:11px;color:#fff;transform:scaleX(0.9260);transform-origin:0 0;">136</span>
<span class="t " style="left:1146.00px;top:282.19px;font-size:11px;color:#fff;transform:scaleX(0.9260);transform-origin:0 0;">104</span>
<span class="t " style="left:1152.00px;top:306.19px;font-size:11px;color:#fff;transform:scaleX(0.8980);transform-origin:0 0;">71</span>
<span class="t " style="left:1152.00px;top:330.19px;font-size:11px;color:#fff;transform:scaleX(0.8980);transform-origin:0 0;">39</span>
<span class="t " style="left:1156.88px;top:354.19px;font-size:11px;color:#fff;">6</span>
<span class="t " style="left:1148.00px;top:379.19px;font-size:11px;color:#fff;transform:scaleX(0.9430);transform-origin:0 0;">-26</span>
<span class="t " style="left:1148.00px;top:403.19px;font-size:11px;color:#fff;transform:scaleX(0.9430);transform-origin:0 0;">-59</span>
<span class="t " style="left:1148.00px;top:428.19px;font-size:11px;color:#fff;transform:scaleX(0.9430);transform-origin:0 0;">-91</span>
<span class="t " style="left:1142.00px;top:451.19px;font-size:11px;color:#fff;letter-spacing:-0.344px;">-124</span>
<span class="t " style="left:1142.00px;top:475.19px;font-size:11px;color:#fff;letter-spacing:-0.344px;">-156</span>
<span class="t " style="left:1142.00px;top:500.19px;font-size:11px;color:#fff;letter-spacing:-0.344px;">-189</span>
<span class="t " style="left:1142.00px;top:525.19px;font-size:11px;color:#fff;letter-spacing:-0.344px;">-222</span>
<span class="t " style="left:1142.00px;top:549.19px;font-size:11px;color:#fff;letter-spacing:-0.344px;">-254</span>
<span class="t " style="left:1146.00px;top:573.19px;font-size:11px;color:#fff;transform:scaleX(0.9260);transform-origin:0 0;">287</span>
<span class="t " style="left:1151.00px;top:587.69px;font-size:11px;color:#fff;letter-spacing:-0.028px;">1729.93</span>
<span class="t " style="left:1251.00px;top:587.69px;font-size:11px;color:#fff;letter-spacing:0.006px;">1756.23</span>
<span class="t " style="left:1302.40px;top:587.69px;font-size:11px;color:#fff;letter-spacing:-0.028px;">1769.38</span>
<span class="t " style="left:1401.90px;top:587.69px;font-size:11px;color:#fff;letter-spacing:-0.028px;">1795.68</span>
<span class="t " style="left:1452.70px;top:587.69px;font-size:11px;color:#fff;letter-spacing:-0.028px;">1808.83</span>
<span class="t " style="left:1554.90px;top:587.69px;font-size:11px;color:#fff;letter-spacing:-0.028px;">1835.13</span>
<span class="t" style="left:1123.69px;top:402.00px;font-size:11px;color:#fff;transform:rotate(-90deg) scaleX(0.9854);transform-origin:0 0;">Beneficio / Pérdida</span>
<span class="t " style="left:1357.00px;top:613.19px;font-size:11px;color:#fff;letter-spacing:-0.317px;">Precio</span>
<span class="t " style="left:1335.00px;top:641.19px;font-size:11px;color:#8c8c8c;letter-spacing:-0.121px;">Compra/Venta</span>
<span class="t " style="left:1178.80px;top:669.69px;font-size:11px;color:#ffdc86;letter-spacing:-0.214px;">Análisis de Rentabilidad</span>
<span class="t " style="left:1395.00px;top:669.69px;font-size:11px;color:#ffdc86;letter-spacing:-0.224px;">Análisis de sensibilidad de la Opción</span>
<span class="t " style="left:1125.60px;top:686.19px;font-size:11px;color:#fff;letter-spacing:-0.317px;">Prima (moneda transacción):</span>
<span class="t " style="left:1318.80px;top:686.19px;font-size:11px;color:#fff;letter-spacing:-0.420px;">-0.60</span>
<span class="t " style="left:1370.30px;top:686.19px;font-size:11px;color:#fff;transform:scaleX(0.9217);transform-origin:0 0;">Delta:</span>
<span class="t " style="left:1553.10px;top:686.19px;font-size:11px;color:#fff;transform:scaleX(0.9219);transform-origin:0 0;">90.25%</span>
<span class="t " style="left:1125.60px;top:701.19px;font-size:11px;color:#fff;transform:scaleX(0.8854);transform-origin:0 0;">Prima(pips):</span>
<span class="t " style="left:1321.20px;top:701.19px;font-size:11px;color:#fff;letter-spacing:-0.141px;">0.06</span>
<span class="t " style="left:1370.30px;top:701.19px;font-size:11px;color:#fff;transform:scaleX(0.9007);transform-origin:0 0;">Gamma:</span>
<span class="t " style="left:1559.50px;top:701.19px;font-size:11px;color:#fff;transform:scaleX(0.8973);transform-origin:0 0;">0.00%</span>
<span class="t " style="left:1125.60px;top:717.19px;font-size:11px;color:#fff;letter-spacing:-0.188px;">Maximo beneficio en cuenta de</span>
<span class="t " style="left:1305.20px;top:717.19px;font-size:11px;color:#fff;letter-spacing:-0.420px;">ilimitado</span>
<span class="t " style="left:1370.30px;top:717.19px;font-size:11px;color:#fff;letter-spacing:-0.410px;">Vega:</span>
<span class="t " style="left:1557.50px;top:717.19px;font-size:11px;color:#fff;letter-spacing:-0.241px;">-0.051</span>
<span class="t " style="left:1125.60px;top:734.19px;font-size:11px;color:#fff;letter-spacing:-0.213px;">Maxima perdida en cuenta de</span>
<span class="t " style="left:1294.20px;top:734.19px;font-size:11px;color:#fff;letter-spacing:-0.193px;">-13090.09</span>
<span class="t " style="left:1370.30px;top:734.19px;font-size:11px;color:#fff;letter-spacing:-0.298px;">Theta:</span>
<span class="t " style="left:1557.50px;top:734.19px;font-size:11px;color:#fff;letter-spacing:-0.241px;">-0.009</span>
<span class="t " style="left:1125.60px;top:750.19px;font-size:11px;color:#fff;letter-spacing:-0.234px;">Punto de Equilibrio (brakeven):</span>
<span class="t " style="left:1303.80px;top:750.19px;font-size:11px;color:#fff;letter-spacing:-0.228px;">1800.07</span>
<span class="t " style="left:1370.30px;top:750.19px;font-size:11px;color:#fff;letter-spacing:-0.417px;">Rho:</span>
<span class="t " style="left:1561.50px;top:750.19px;font-size:11px;color:#fff;letter-spacing:-0.383px;">1.761</span>
<span class="t " style="left:1125.60px;top:766.19px;font-size:11px;color:#fff;letter-spacing:-0.234px;">Punto de Equilibrio (brakeven):</span>
<span class="t " style="left:1324.40px;top:766.19px;font-size:11px;color:#fff;transform:scaleX(0.8097);transform-origin:0 0;">------</span>
<span class="t " style="left:1370.30px;top:766.19px;font-size:11px;color:#fff;transform:scaleX(0.8962);transform-origin:0 0;">Phi:</span>
<span class="t " style="left:1557.50px;top:766.19px;font-size:11px;color:#fff;letter-spacing:-0.241px;">-1.742</span>
</div>
<svg style="left:1525px;top:4px" width="70" height="16" viewBox="0 0 70 16"><rect x="6" y="9" width="7" height="2" fill="#a9a9b8"/><rect x="31" y="5" width="8" height="6" fill="none" stroke="#b4b4c4" stroke-width="1.4"/><rect x="34" y="3" width="7" height="3" fill="none" stroke="#b4b4c4" stroke-width="1"/><path d="M56 3 L64 12 M64 3 L56 12" stroke="#b8b8cc" stroke-width="2" fill="none"/></svg>
<div class="a" style="left:0;top:64px;width:331px;height:6px;background:linear-gradient(#b4b4c4 0,#a4a4bc 50%,#b9b9cf 100%)"></div>
<svg style="left:285px;top:55px" width="44" height="12" viewBox="0 0 44 12"><path d="M0 4 L8 4 L4 8 Z" fill="#000"/><path d="M17 1 H22 V6 H24 V7 H20.5 V10 H19.5 V7 H16 V6 H17 Z M18 2 V6 H20 V2 Z" fill="#000" fill-rule="evenodd"/><path d="M31 2 L38 9 M38 2 L31 9" stroke="#000" stroke-width="1.1" fill="none"/></svg>
<svg style="left:462px;top:145px" width="80" height="75" viewBox="0 0 80 75"><g stroke="#e01818" stroke-width="2.4" fill="none" stroke-dasharray="1.8 0.9"><path d="M22 37 H41 L52 24"/><path d="M22 44.5 H41 L52 57"/></g><path d="M48 20 H57 V29 H54.5 V22.5 H48 Z" fill="#e01818"/><path d="M48 61 H57 V52 H54.5 V58.5 H48 Z" fill="#e01818"/><path d="M51 55 H56 V60 H51 Z" fill="#e01818"/></svg>
<svg style="left:920px;top:530px" width="56" height="50" viewBox="0 0 56 50"><defs><linearGradient id="fold" x1="0" y1="1" x2="1" y2="0"><stop offset="0" stop-color="#606060"/><stop offset="0.38" stop-color="#6c6c6c"/><stop offset="0.5" stop-color="#8a8a8a"/></linearGradient></defs><path d="M8.8 4.4 C14 10 17 18 17 30 C17.5 35 20 37 26 37.5 C36 38.5 44 40 51 43.6 Z" fill="url(#fold)"/></svg>
<svg style="left:826px;top:574px" width="132" height="132" viewBox="-66 -66 132 132">
<defs>
<radialGradient id="gsh" cx="0" cy="2" r="66" gradientUnits="userSpaceOnUse"><stop offset="0.86" stop-color="#0c0c0c" stop-opacity=".8"/><stop offset="1" stop-color="#222" stop-opacity="0"/></radialGradient>
<linearGradient id="gring2" x1="0" y1="0" x2="0" y2="1"><stop offset="0" stop-color="#f6f6f6"/><stop offset="0.45" stop-color="#b4b4b4"/><stop offset="1" stop-color="#666"/></linearGradient>
<radialGradient id="gface" cx="6" cy="-22" r="70" gradientUnits="userSpaceOnUse"><stop offset="0" stop-color="#ededed"/><stop offset="0.35" stop-color="#c6c6c6"/><stop offset="1" stop-color="#a2a2a2"/></radialGradient>
<linearGradient id="gred" x1="0" y1="0" x2="0" y2="1"><stop offset="0" stop-color="#e05858"/><stop offset="0.45" stop-color="#d42020"/><stop offset="1" stop-color="#c01010"/></linearGradient>
<radialGradient id="gball" cx="-8" cy="-4" r="40" gradientUnits="userSpaceOnUse"><stop offset="0" stop-color="#c99a9a"/><stop offset="0.6" stop-color="#c4b0b0"/><stop offset="1" stop-color="#bdbdbd"/></radialGradient>
<radialGradient id="ghl" cx="2" cy="-32" r="26" gradientUnits="userSpaceOnUse"><stop offset="0" stop-color="#fff" stop-opacity=".95"/><stop offset="1" stop-color="#fff" stop-opacity="0"/></radialGradient>
</defs>
<circle r="65" cy="2" fill="url(#gsh)"/>
<circle r="60" fill="url(#gring2)"/>
<circle r="53.5" fill="#6a6a6a"/>
<circle r="52" fill="url(#gface)"/>
<path d="M0 0 L-31.0 41.1 A51.5 51.5 0 0 0 33.1 39.5 Z" fill="#cfcfcf" opacity=".75"/>
<path d="M0 0 L49.7 -13.3 A51.5 51.5 0 0 1 33.1 39.5 Z" fill="#9c9c9c" opacity=".6"/>
<path d="M1.8 -51.5 A51.5 51.5 0 0 0 -31.0 41.1 L-19.9 26.4 A33 33 0 0 1 1.2 -33.0 Z" fill="url(#gred)"/>
<circle r="33" fill="url(#gball)"/>
<path d="M0 0 L-19.9 26.4 A33 33 0 0 0 21.2 25.3 Z" fill="#b8b8b8" opacity=".8"/>
<circle r="52" fill="url(#ghl)"/>
<text x="-0.3" y="12.8" text-anchor="middle" font-family="Liberation Sans, sans-serif" font-size="34" fill="#fff">2</text>
</svg>
<div class="a" style="left:1104px;top:64px;width:496px;height:6px;background:linear-gradient(#b4b4c4 0,#a4a4bc 50%,#b9b9cf 100%)"></div>
<svg style="left:1556px;top:55px" width="44" height="12" viewBox="0 0 44 12"><path d="M0 4 L8 4 L4 8 Z" fill="#000"/><path d="M17 1 H22 V6 H24 V7 H20.5 V10 H19.5 V7 H16 V6 H17 Z M18 2 V6 H20 V2 Z" fill="#000" fill-rule="evenodd"/><path d="M31 2 L38 9 M38 2 L31 9" stroke="#000" stroke-width="1.1" fill="none"/></svg>
<svg style="left:1171px;top:145px" width="403.5" height="427.5" viewBox="0 0 403.5 427.5">
<defs>
<linearGradient id="rg" x1="0" y1="0" x2="0" y2="1"><stop offset="0" stop-color="#4a0a0a"/><stop offset="0.5" stop-color="#961010"/><stop offset="1" stop-color="#dc1818"/></linearGradient>
<linearGradient id="gg" x1="0" y1="0" x2="0" y2="1"><stop offset="0" stop-color="#1cae1c"/><stop offset="0.5" stop-color="#0e760e"/><stop offset="1" stop-color="#084008"/></linearGradient>
</defs>
<path d="M1 14.5 H403.5" stroke="#8a8a8a" stroke-width="1" stroke-dasharray="3 3"/><path d="M1 39.5 H403.5" stroke="#8a8a8a" stroke-width="1" stroke-dasharray="3 3"/><path d="M1 62.5 H403.5" stroke="#8a8a8a" stroke-width="1" stroke-dasharray="3 3"/><path d="M1 87.5 H403.5" stroke="#8a8a8a" stroke-width="1" stroke-dasharray="3 3"/><path d="M1 111.5 H403.5" stroke="#8a8a8a" stroke-width="1" stroke-dasharray="3 3"/><path d="M1 136.5 H403.5" stroke="#8a8a8a" stroke-width="1" stroke-dasharray="3 3"/><path d="M1 160.5 H403.5" stroke="#8a8a8a" stroke-width="1" stroke-dasharray="3 3"/><path d="M1 184.5 H403.5" stroke="#8a8a8a" stroke-width="1" stroke-dasharray="3 3"/><path d="M1 208.5 H403.5" stroke="#8a8a8a" stroke-width="1" stroke-dasharray="3 3"/><path d="M1 233.5 H403.5" stroke="#8a8a8a" stroke-width="1" stroke-dasharray="3 3"/><path d="M1 257.5 H403.5" stroke="#8a8a8a" stroke-width="1" stroke-dasharray="3 3"/><path d="M1 282.5 H403.5" stroke="#8a8a8a" stroke-width="1" stroke-dasharray="3 3"/><path d="M1 305.5 H403.5" stroke="#8a8a8a" stroke-width="1" stroke-dasharray="3 3"/><path d="M1 329.5 H403.5" stroke="#8a8a8a" stroke-width="1" stroke-dasharray="3 3"/><path d="M1 354.5 H403.5" stroke="#8a8a8a" stroke-width="1" stroke-dasharray="3 3"/><path d="M1 379.5 H403.5" stroke="#8a8a8a" stroke-width="1" stroke-dasharray="3 3"/><path d="M1 403.5 H403.5" stroke="#8a8a8a" stroke-width="1" stroke-dasharray="3 3"/><path d="M25.5 424.5 V427.5" stroke="#7a7a7a" stroke-width="1"/><path d="M50.5 424.5 V427.5" stroke="#7a7a7a" stroke-width="1"/><path d="M75.5 424.5 V427.5" stroke="#7a7a7a" stroke-width="1"/><path d="M100.5 424.5 V427.5" stroke="#7a7a7a" stroke-width="1"/><path d="M125.5 424.5 V427.5" stroke="#7a7a7a" stroke-width="1"/><path d="M151.5 424.5 V427.5" stroke="#7a7a7a" stroke-width="1"/><path d="M176.5 424.5 V427.5" stroke="#7a7a7a" stroke-width="1"/><path d="M201.5 424.5 V427.5" stroke="#7a7a7a" stroke-width="1"/><path d="M226.5 424.5 V427.5" stroke="#7a7a7a" stroke-width="1"/><path d="M251.5 424.5 V427.5" stroke="#7a7a7a" stroke-width="1"/><path d="M277.5 424.5 V427.5" stroke="#7a7a7a" stroke-width="1"/><path d="M302.5 424.5 V427.5" stroke="#7a7a7a" stroke-width="1"/><path d="M327.5 424.5 V427.5" stroke="#7a7a7a" stroke-width="1"/><path d="M352.5 424.5 V427.5" stroke="#7a7a7a" stroke-width="1"/><path d="M377.5 424.5 V427.5" stroke="#7a7a7a" stroke-width="1"/><path d="M403.5 424.5 V427.5" stroke="#7a7a7a" stroke-width="1"/>
<path d="M0 213 L134.5 213 L0 408.3 Z" fill="url(#rg)" fill-opacity=".84"/>
<path d="M268.2 213 L403.5 213 L403.5 19.1 Z" fill="url(#gg)" fill-opacity=".86"/>
<path d="M0 213 H268.2" stroke="#1010ff" stroke-width="2"/>
<path d="M268.2 213 H403.5" stroke="#2a6cff" stroke-width="1.4"/>
<path d="M0.0 408.3 L134.5 213.5 L268.2 213.5 L403.5 19.1" stroke="#ff0000" stroke-width="2" fill="none"/>
<circle cx="0.0" cy="408.3" r="3" fill="none" stroke="#1818ff" stroke-width="1.6"/><circle cx="134.5" cy="213.5" r="3" fill="none" stroke="#1818ff" stroke-width="1.6"/><circle cx="268.2" cy="213.5" r="3" fill="none" stroke="#1818ff" stroke-width="1.6"/><circle cx="403.5" cy="19.1" r="3" fill="none" stroke="#1818ff" stroke-width="1.6"/>
</svg>
</body></html>
